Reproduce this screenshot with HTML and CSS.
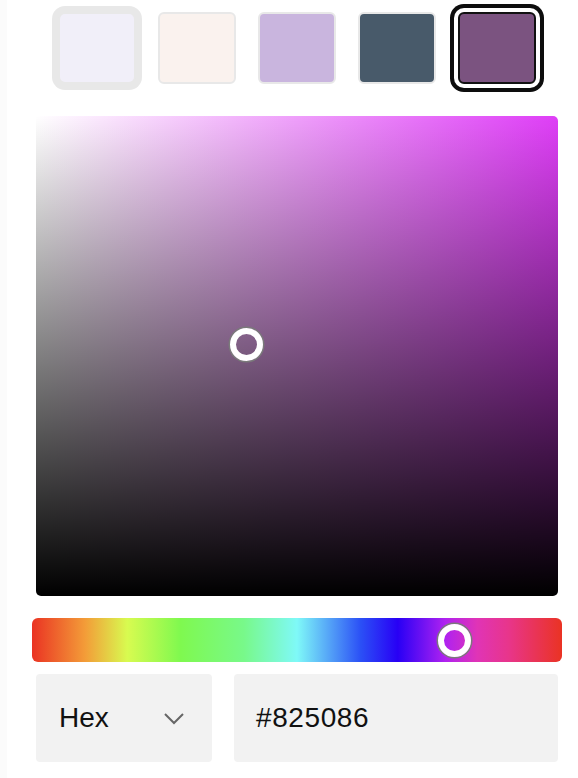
FILE: index.html
```html
<!DOCTYPE html>
<html>
<head>
<meta charset="utf-8">
<link rel="stylesheet" href="styles.css">
</head>
<body>
<div class="page">
  <div class="picker">
    <div class="swatches">
      <button class="swatch focused" style="background:#f1eff9"></button>
      <button class="swatch" style="background:#faf2ee"></button>
      <button class="swatch" style="background:#c9b5de"></button>
      <button class="swatch" style="background:#485a6a"></button>
      <button class="swatch selected" style="background:#7b5380"></button>
    </div>
    <div class="area">
      <div class="pointer"></div>
    </div>
    <div class="hue">
      <div class="thumb"></div>
    </div>
    <div class="fields">
      <div class="format">
        <span class="format-label">Hex</span>
        <svg class="chevron" width="22" height="14" viewBox="0 0 22 14"><path d="M2 2 L11 11 L20 2" fill="none" stroke="#666" stroke-width="2"/></svg>
      </div>
      <div class="value">#825086</div>
    </div>
  </div>
</div>
</body>
</html>
```

FILE: styles.css
```css
html, body {
  margin: 0;
  padding: 0;
  background: #fff;
}
.page {
  width: 578px;
  height: 778px;
  box-sizing: border-box;
  border-left: 7px solid #fbfbfb;
  font-family: "Liberation Sans", Arial, sans-serif;
}
.picker {
  width: 522px;
  margin-left: 29px;
  padding-top: 12px;
  display: flex;
  flex-direction: column;
}
.swatches {
  display: flex;
  justify-content: center;
  gap: 22px;
  height: 72px;
}
.swatch {
  width: 78px;
  height: 72px;
  box-sizing: border-box;
  border: 2px solid #e8e8e8;
  border-radius: 6px;
  padding: 0;
  margin: 0;
}
.swatch.focused {
  box-shadow: 0 0 0 6px #e8e8e8;
  border-radius: 7px;
}
.swatch.selected {
  border-color: #111;
  box-shadow: 0 0 0 4px #fff, 0 0 0 8px #0d0d0d;
  border-radius: 6px;
}
.area {
  position: relative;
  margin-top: 32px;
  height: 480px;
  border-radius: 5px;
  background:
    linear-gradient(to top, #000, rgba(0,0,0,0)),
    linear-gradient(to right, #fff, #df3ef7);
}
.pointer {
  position: absolute;
  left: 193.5px;
  top: 211.5px;
  width: 33px;
  height: 33px;
  box-sizing: border-box;
  border: 6.5px solid #fff;
  border-radius: 50%;
  box-shadow: 0 0 0 1.5px #7a7a7a;
}
.hue {
  position: relative;
  margin: 22px -4px 0;
  height: 44px;
  border-radius: 6px;
  background: linear-gradient(to right,
    #ea3323 0%,
    #f39c38 10%,
    #d8fb50 18%,
    #7ff94f 28%,
    #78f98a 40%,
    #7ff9f8 50%,
    #2b50f6 62%,
    #2800f5 69%,
    #b022f0 78%,
    #e034b6 84%,
    #e8358a 90%,
    #ea3323 100%);
}
.thumb {
  position: absolute;
  left: 405.5px;
  top: 5.5px;
  width: 33px;
  height: 33px;
  box-sizing: border-box;
  border: 6.5px solid #fff;
  border-radius: 50%;
  box-shadow: 0 0 0 1.5px #7a7a7a;
}
.fields {
  display: flex;
  gap: 22px;
  margin-top: 12px;
  height: 88px;
}
.format {
  width: 176px;
  box-sizing: border-box;
  background: #f2f2f2;
  border-radius: 4px;
  display: flex;
  align-items: center;
  justify-content: space-between;
  padding: 0 27px 0 23px;
}
.format-label, .value {
  font-size: 28px;
  color: #111;
}
.chevron {
  display: block;
  margin-top: 2px;
}
.value {
  flex: 1;
  background: #f2f2f2;
  border-radius: 4px;
  display: flex;
  align-items: center;
  padding-left: 22px;
  letter-spacing: 0.6px;
}
```
